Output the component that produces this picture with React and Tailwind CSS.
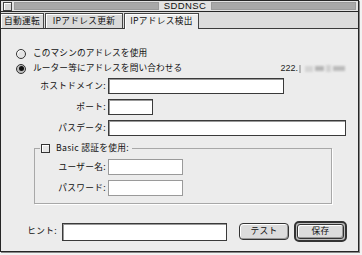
export default function App() {
  const font = "font-['Noto_Sans_CJK_JP',sans-serif]";
  const label = "text-right text-[8.7px] leading-none tracking-[0.3px]";
  const field = "bg-white border border-[#3a3a3a] shadow-[inset_1px_1px_0_#999]";

  return (
    <div className={`w-[362px] h-[255px] bg-[#f2f2f2] overflow-hidden text-[#111] ${font}`}>
      <div className="w-[359px] h-[252px] border border-[#262626] bg-[#ececec] flex flex-col shadow-[1px_1px_0_#888]">
        {/* title bar */}
        <div className="h-[11px] flex items-center gap-[2px] px-[2px] bg-[#e2e2e2] border-b border-[#262626]">
          <div className="w-[9px] h-[9px] border border-[#444] bg-[#d6d6d6] shadow-[inset_1px_1px_0_#fff]" />
          <div className="flex-1 h-[8px] bg-[#a8a8a8] border border-[#9a9a9a]" />
          <div className="px-[3px] text-[9.5px] leading-none font-['Liberation_Sans',sans-serif] tracking-[0.4px]">
            SDDNSC
          </div>
          <div className="flex-1 h-[8px] bg-[#a8a8a8] border border-[#9a9a9a]" />
        </div>

        {/* tabs */}
        <div className="h-[17px] flex items-end gap-[1px] bg-[#dcdcdc] border-b border-[#3a3a3a]">
          <div className="w-[43px] h-[15px] flex items-center justify-center border border-b-0 border-l-0 border-[#444] bg-[#dadada] shadow-[inset_1px_1px_0_#fff] text-[8.7px] leading-none tracking-[0.3px]">
            自動運転
          </div>
          <div className="w-[78px] h-[15px] flex items-center justify-center border border-b-0 border-[#444] bg-[#dadada] shadow-[inset_1px_1px_0_#fff] text-[8.7px] leading-none tracking-[0.3px]">
            IPアドレス更新
          </div>
          <div className="w-[75px] h-[16px] -mb-px flex items-center justify-center border border-b-0 border-[#444] bg-[#ececec] shadow-[inset_1px_1px_0_#fff] text-[8.7px] leading-none tracking-[0.3px]">
            IPアドレス検出
          </div>
        </div>

        {/* content */}
        <div className="flex-1 flex flex-col pt-[19px]">
          <div className="h-[11px] flex items-center pl-[15px] gap-[7px]">
            <div className="w-[10px] h-[10px] rounded-full border border-[#333] bg-[#e4e4e4] shadow-[inset_1px_1px_0_#fff]" />
            <span className="text-[8.7px] leading-none tracking-[0.1px]">このマシンのアドレスを使用</span>
          </div>
          <div className="h-[11px] mt-[4px] flex items-center pl-[15px] pr-[13px] gap-[7px]">
            <div className="w-[10px] h-[10px] rounded-full border border-[#333] bg-[#bdbdbd] flex items-center justify-center">
              <div className="w-[5px] h-[5px] rounded-full bg-[#111]" />
            </div>
            <span className="text-[8.7px] leading-none tracking-[0.1px]">ルーター等にアドレスを問い合わせる</span>
            <div className="flex-1" />
            <div className="flex items-center">
              <span className="text-[9px] leading-none font-['Liberation_Sans',sans-serif] text-[#222]">222.</span>
              <div className="w-[2px] h-[8px] ml-[1px] bg-[#b8b8b8] blur-[0.5px]" />
              <div className="w-[40px] h-[8px] ml-[4px] flex items-center gap-[2px] blur-[1px]">
                <div className="w-[8px] h-[6px] bg-[#d4d4d4]" />
                <div className="w-[10px] h-[5px] bg-[#b5b5b5]" />
                <div className="w-[5px] h-[7px] bg-[#d0d0d0]" />
                <div className="w-[12px] h-[5px] bg-[#bbbbbb]" />
              </div>
            </div>
          </div>

          <div className="mt-[4px] flex items-center gap-[2px]">
            <div className={`w-[105px] ${label}`}>ホストドメイン:</div>
            <div className={`w-[176px] h-[16px] ${field}`} />
          </div>
          <div className="mt-[5px] flex items-center gap-[2px]">
            <div className={`w-[105px] ${label}`}>ポート:</div>
            <div className={`w-[45px] h-[16px] ${field}`} />
          </div>
          <div className="mt-[5px] flex items-center gap-[2px]">
            <div className={`w-[105px] ${label}`}>パスデータ:</div>
            <div className={`w-[238px] h-[16px] ${field}`} />
          </div>

          <fieldset className="mt-[7px] ml-[33px] w-[298px] border border-[#a8a8a8] shadow-[1px_1px_0_#fff] pb-[7px]">
            <legend className="ml-[5px] px-[1px] flex items-center gap-[6px] h-[11px]">
              <div className="w-[9px] h-[9px] border border-[#333] bg-[#e6e6e6] shadow-[inset_1px_1px_0_#fff]" />
              <span className="text-[8.7px] leading-none tracking-[0.3px] pr-[2px]">Basic 認証を使用:</span>
            </legend>
            <div className="mt-[5px] flex items-center gap-[2px]">
              <div className={`w-[71px] ${label}`}>ユーザー名:</div>
              <div className="w-[75px] h-[16px] bg-white border border-[#9a9a9a]" />
            </div>
            <div className="mt-[5px] flex items-center gap-[2px]">
              <div className={`w-[71px] ${label}`}>パスワード:</div>
              <div className="w-[75px] h-[16px] bg-white border border-[#9a9a9a]" />
            </div>
          </fieldset>

          <div className="mt-[17px] flex items-center">
            <div className={`w-[56px] ${label}`}>ヒント:</div>
            <div className={`ml-[5px] w-[165px] h-[18px] ${field}`} />
            <div className="ml-[12px] w-[50px] h-[17px] rounded-[4px] border border-[#333] bg-[#dcdcdc] shadow-[inset_1px_1px_0_#fff,inset_-1px_-1px_0_#999] flex items-center justify-center text-[8.7px] leading-none tracking-[0.3px]">
              テスト
            </div>
            <div className="ml-[5px] w-[53px] h-[21px] rounded-[5px] border-2 border-[#333] bg-[#bdbdbd] p-[1px] flex">
              <div className="flex-1 rounded-[3px] border border-[#333] bg-[#dcdcdc] shadow-[inset_1px_1px_0_#fff,inset_-1px_-1px_0_#999] flex items-center justify-center text-[8.7px] leading-none tracking-[0.3px]">
                保存
              </div>
            </div>
          </div>
        </div>
      </div>
    </div>
  );
}
